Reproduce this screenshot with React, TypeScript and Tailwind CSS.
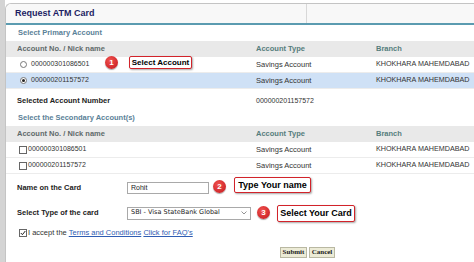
import React from "react";

const primaryRows = [
  { no: "000000301086501", type: "Savings Account", branch: "KHOKHARA MAHEMDABAD", checked: false },
  { no: "000000201157572", type: "Savings Account", branch: "KHOKHARA MAHEMDABAD", checked: true },
];

const secondaryRows = [
  { no: "000000301086501", type: "Savings Account", branch: "KHOKHARA MAHEMDABAD" },
  { no: "000000201157572", type: "Savings Account", branch: "KHOKHARA MAHEMDABAD" },
];

const Badge = ({ n, className }: { n: string; className: string }) => (
  <div
    className={`absolute w-[13px] h-[13px] rounded-full bg-[radial-gradient(circle_at_40%_35%,#f0524f,#c4161c)] shadow-[0_1px_1px_rgba(0,0,0,0.35)] flex items-center justify-center text-white text-[8px] font-bold leading-none ${className}`}
  >
    {n}
  </div>
);

const Callout = ({ text, className }: { text: string; className: string }) => (
  <div
    className={`absolute bg-white border-[1.5px] border-[#d2232a] rounded-[2px] shadow-[1px_1px_2px_rgba(0,0,0,0.35)] flex items-center justify-center font-bold text-black leading-none ${className}`}
  >
    {text}
  </div>
);

const HeaderRow = ({ className = "" }: { className?: string }) => (
  <div className={`flex items-center h-[16px] bg-[#e9e9e9] font-bold text-[7.5px] ${className}`}>
    <div className="w-[250px] pl-[11px] text-[#5f6a6a]">Account No. / Nick name</div>
    <div className="w-[120px] text-[#567d7c]">Account Type</div>
    <div className="flex-1 text-[#567d7c]">Branch</div>
  </div>
);

export default function App() {
  return (
    <div
      className="relative w-[474px] h-[262px] flex bg-white overflow-hidden text-[#333] text-[7.5px]"
      style={{ fontFamily: '"Liberation Sans", Arial, sans-serif' }}
    >
      <div className="w-[5px] bg-[#d4d4d4]" />
      <div className="flex-1 pt-[3px] bg-white">
        <div className="h-full border-l border-t border-[#c4c4c4] rounded-tl-[6px] flex flex-col">
          {/* title bar */}
          <div className="flex h-[19px] bg-[#f8f8f8] rounded-tl-[6px]">
            <div className="w-[301px] border-r border-[#d8d8d8] flex items-center pl-[9px] text-[9px] font-bold text-[#1d1d63]">
              Request ATM Card
            </div>
            <div className="flex-1" />
          </div>
          <div className="h-[2px] bg-[#5b9bb0]" />

          <div className="h-[16px] flex items-center pl-[12px] font-bold text-[#5a8197]">
            Select Primary Account
          </div>
          <HeaderRow />
          {primaryRows.map((r) => (
            <div
              key={r.no}
              className={`flex items-center h-[16px] border-b border-[#ececec] ${r.checked ? "bg-[#cfe1f6]" : ""}`}
            >
              <div className="w-[250px] pl-[14px] flex items-center gap-[4px]">
                <span className="w-[7px] h-[7px] rounded-full border border-[#777] bg-white flex items-center justify-center">
                  {r.checked && <span className="w-[3px] h-[3px] rounded-full bg-[#222]" />}
                </span>
                <span className="text-[7px]">{r.no}</span>
              </div>
              <div className="w-[120px]">{r.type}</div>
              <div className="flex-1 whitespace-nowrap text-[7.2px]">{r.branch}</div>
            </div>
          ))}

          <div className="h-[20px] pt-[4px] flex items-center">
            <div className="w-[250px] pl-[11px] font-bold text-[#222]">Selected Account Number</div>
            <div className="text-[7px]">000000201157572</div>
          </div>
          <div className="h-[17px] flex items-center pl-[12px] font-bold text-[#5a8197]">
            Select the Secondary Account(s)
          </div>
          <HeaderRow />
          {secondaryRows.map((r) => (
            <div key={r.no} className="flex items-center h-[16px] border-b border-[#ececec]">
              <div className="w-[250px] pl-[13px] flex items-center gap-[1px]">
                <span className="w-[8px] h-[8px] border border-[#666] bg-white" />
                <span className="text-[7px]">{r.no}</span>
              </div>
              <div className="w-[120px]">{r.type}</div>
              <div className="flex-1 whitespace-nowrap text-[7.2px]">{r.branch}</div>
            </div>
          ))}

          {/* form */}
          <div className="flex flex-col pt-[5px]">
            <div className="flex items-center h-[18px]">
              <div className="w-[121px] pl-[11px] font-bold text-[#222]">Name on the Card</div>
              <div className="w-[82px] h-[12px] border border-[#a9a9a9] bg-white flex items-center pl-[3px] text-[7px] text-[#222]">
                Rohit
              </div>
            </div>
            <div className="flex items-center h-[18px] mt-[7px]">
              <div className="w-[121px] pl-[11px] font-bold text-[#222]">Select Type of the card</div>
              <div
                className="w-[124px] h-[13px] border border-[#a9a9a9] bg-white flex items-center justify-between pl-[3px] pr-[3px] text-[7px] text-[#222]"
                style={{ fontFamily: '"DejaVu Sans", Tahoma, sans-serif' }}
              >
                <span className="text-[6.5px]">SBI - Visa StateBank Global</span>
                <svg width="6" height="4" viewBox="0 0 6 4">
                  <path d="M0.5 0.5 L3 3 L5.5 0.5" fill="none" stroke="#888" strokeWidth="0.9" />
                </svg>
              </div>
            </div>
            <div className="flex items-center h-[14px] mt-[4px] pl-[13px] gap-[1px]">
              <span className="w-[8px] h-[8px] border border-[#666] bg-white flex items-center justify-center">
                <svg width="6" height="6" viewBox="0 0 6 6">
                  <path d="M0.8 3 L2.4 4.7 L5.3 1" fill="none" stroke="#222" strokeWidth="1" />
                </svg>
              </span>
              <span className="text-[7.5px]">
                I accept the{" "}
                <span className="text-[#2f5db3] underline">Terms and Conditions</span>{" "}
                <span className="text-[#2f5db3] underline">Click for FAQ's</span>
              </span>
            </div>
            <div
              className="flex gap-[2px] mt-[7px] pl-[274px]"
              style={{ fontFamily: '"Liberation Serif", "Times New Roman", serif' }}
            >
              <div className="w-[27px] h-[11px] bg-[#ecebd6] border border-[#b9b8a2] flex items-center justify-center text-[7px] font-bold text-[#222]">
                Submit
              </div>
              <div className="w-[26px] h-[11px] bg-[#ecebd6] border border-[#b9b8a2] flex items-center justify-center text-[7px] font-bold text-[#222]">
                Cancel
              </div>
            </div>
          </div>
        </div>
      </div>

      {/* annotations */}
      <Badge n="1" className="left-[105px] top-[56px]" />
      <Callout text="Select Account" className="left-[129px] top-[56px] w-[63px] h-[13px] text-[8px]" />
      <Badge n="2" className="left-[213px] top-[180px]" />
      <Callout text="Type Your name" className="left-[234px] top-[177px] w-[77px] h-[16px] text-[9px]" />
      <Badge n="3" className="left-[257px] top-[206px]" />
      <Callout text="Select Your Card" className="left-[277px] top-[205px] w-[78px] h-[17px] text-[9px]" />
    </div>
  );
}
